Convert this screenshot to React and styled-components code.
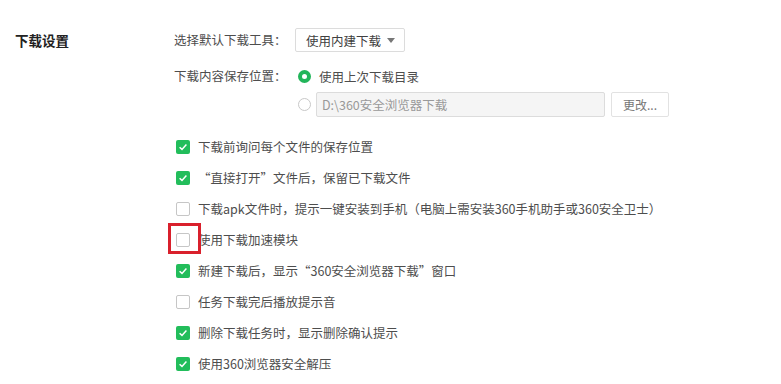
import React from "react";
import styled, { createGlobalStyle } from "styled-components";

const GlobalStyle = createGlobalStyle`
  body {
    margin: 0;
    background: #fff;
    font-family: "Noto Sans CJK SC", "Liberation Sans", sans-serif;
    color: #333;
  }
`;

const Page = styled.div`
  display: flex;
  width: 781px;
  height: 384px;
  padding: 28px 0 0 15px;
  box-sizing: border-box;
  overflow: hidden;
`;

const Title = styled.div`
  width: 159px;
  flex-shrink: 0;
  font-size: 13.5px;
  font-weight: bold;
  line-height: 24px;
  color: #222;
`;

const Main = styled.div`
  display: flex;
  flex-direction: column;
`;

const FieldRow = styled.div`
  display: flex;
  align-items: center;
  height: ${(p) => p.$h || 24}px;
  margin-top: ${(p) => p.$mt || 0}px;
`;

const Label = styled.span`
  width: 121px;
  font-size: 12.5px;
  line-height: 24px;
  color: #4d4d4d;
  white-space: nowrap;
`;

const Select = styled.div`
  display: flex;
  align-items: center;
  height: 24px;
  padding: 0 9px 0 10px;
  box-sizing: border-box;
  border: 1px solid #dcdcdc;
  border-radius: 2px;
  font-size: 12.5px;
  color: #404040;
  gap: 6px;
`;

const Caret = styled.span`
  width: 0;
  height: 0;
  border-left: 4px solid transparent;
  border-right: 4px solid transparent;
  border-top: 5px solid #777;
`;

const Radio = styled.span`
  width: 13px;
  height: 13px;
  margin: 0 8px 0 3px;
  box-sizing: border-box;
  border-radius: 50%;
  flex-shrink: 0;
  ${(p) =>
    p.$on
      ? "border: 4px solid #22b55a; background: #fff;"
      : "border: 1px solid #c8c8c8; background: #fff;"}
`;

const Text = styled.span`
  font-size: 12.5px;
  color: #4d4d4d;
  white-space: nowrap;
`;

const PathInput = styled.div`
  width: 289px;
  height: 25px;
  box-sizing: border-box;
  border: 1px solid #dcdcdc;
  border-radius: 2px;
  background: #f5f5f5;
  padding-left: 5px;
  display: flex;
  align-items: center;
  font-size: 12.5px;
  color: #999;
  margin-left: -3px;
`;

const ChangeButton = styled.div`
  width: 58px;
  height: 25px;
  margin-left: 6px;
  box-sizing: border-box;
  border: 1px solid #e2e2e2;
  border-radius: 2px;
  background: #fff;
  display: flex;
  align-items: center;
  justify-content: center;
  font-size: 12px;
  color: #777;
`;

const CheckList = styled.div`
  display: flex;
  flex-direction: column;
  margin-top: 14px;
  margin-left: 2px;
`;

const CheckRow = styled.div`
  display: flex;
  align-items: center;
  height: 31px;
`;

const BoxWrap = styled.span`
  position: relative;
  width: 14px;
  height: 14px;
  margin-right: 8px;
  flex-shrink: 0;
`;

const Box = styled.span`
  display: flex;
  align-items: center;
  justify-content: center;
  width: 14px;
  height: 14px;
  box-sizing: border-box;
  border-radius: 2px;
  ${(p) =>
    p.$on
      ? "background: #22bd5b; border: none;"
      : "background: #fff; border: 1px solid #c6c6c6;"}
`;

const Highlight = styled.span`
  position: absolute;
  left: -8px;
  top: -10px;
  width: 33px;
  height: 31px;
  box-sizing: border-box;
  border: 3px solid #d9202c;
  z-index: 2;
`;

const Tick = () => (
  <svg width="10" height="10" viewBox="0 0 10 10">
    <path d="M1.6 5.2 L4 7.4 L8.4 2.6" fill="none" stroke="#fff" strokeWidth="1.5" />
  </svg>
);

const options = [
  { on: true, text: "下载前询问每个文件的保存位置" },
  { on: true, text: "“直接打开”文件后，保留已下载文件" },
  { on: false, text: "下载apk文件时，提示一键安装到手机（电脑上需安装360手机助手或360安全卫士）" },
  { on: false, text: "使用下载加速模块", mark: true },
  { on: true, text: "新建下载后，显示“360安全浏览器下载”窗口" },
  { on: false, text: "任务下载完后播放提示音" },
  { on: true, text: "删除下载任务时，显示删除确认提示" },
  { on: true, text: "使用360浏览器安全解压" },
];

export default function App() {
  return (
    <>
      <GlobalStyle />
      <Page>
        <Title>下载设置</Title>
        <Main>
          <FieldRow>
            <Label>选择默认下载工具：</Label>
            <Select>
              使用内建下载
              <Caret />
            </Select>
          </FieldRow>
          <FieldRow $mt={12}>
            <Label>下载内容保存位置：</Label>
            <Radio $on />
            <Text>使用上次下载目录</Text>
          </FieldRow>
          <FieldRow $mt={4} $h={25}>
            <Label />
            <Radio />
            <PathInput>D:\360安全浏览器下载</PathInput>
            <ChangeButton>更改...</ChangeButton>
          </FieldRow>
          <CheckList>
            {options.map((o) => (
              <CheckRow key={o.text}>
                <BoxWrap>
                  <Box $on={o.on}>{o.on && <Tick />}</Box>
                  {o.mark && <Highlight />}
                </BoxWrap>
                <Text>{o.text}</Text>
              </CheckRow>
            ))}
          </CheckList>
        </Main>
      </Page>
    </>
  );
}
